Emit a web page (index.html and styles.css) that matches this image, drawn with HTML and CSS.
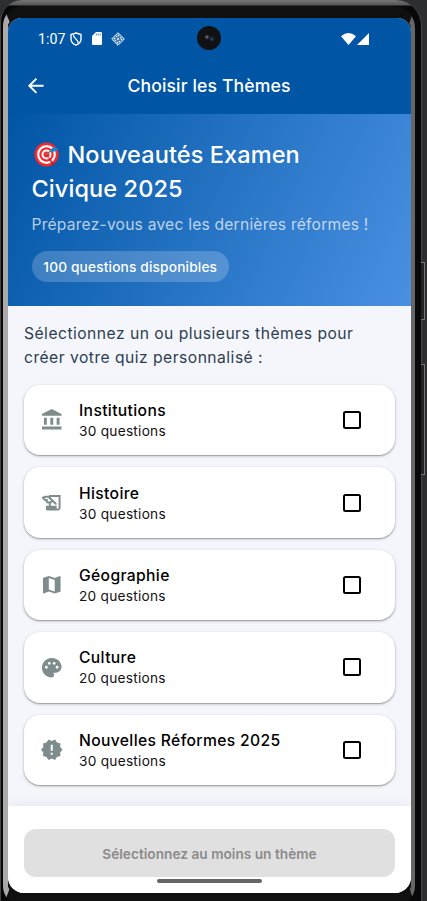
FILE: index.html
```html
<!DOCTYPE html>
<html lang="fr">
<head>
<meta charset="utf-8">
<title>Choisir les Thèmes</title>
<link rel="stylesheet" href="styles.css">
</head>
<body>
<div class="device">
<div class="bezel">
<div class="screen">
  <div class="status">
    <span class="clock">1:07</span>
    <svg class="s-shield" viewBox="0 0 12 14"><path d="M6 1 11 2.600V7c0 3-2 5-5 6.200C3 12 1 10 1 7V2.600Z" fill="none" stroke="#fff" stroke-width="1.400"/><path d="M3.500 3C3.500 7.500 8.700 6.500 8 11.300" fill="none" stroke="#fff" stroke-width="1.300"/></svg>
    <svg class="s-card" viewBox="0 0 10 13"><path d="M4 0h4.800Q10 0 10 1.200v10.600Q10 13 8.800 13H1.200Q0 13 0 11.800V4Z" fill="#fff"/><path d="M4.300 1.500v2M6.200 1.500v2M8.100 1.500v2" stroke="#0055a4" stroke-width=".7"/></svg>
    <svg class="s-diamond" viewBox="0 0 14 14"><g fill="none" stroke="#fff"><path d="M7 .7 13.300 7 7 13.300.7 7Z" stroke-width="1"/><path d="M7 3 11 7 7 11 3 7Z" stroke-width="1.300" stroke-dasharray="2 .8"/><path d="M5.500 7h3M7 5.500v3" stroke-width="1"/></g></svg>
    <svg class="s-wifi" viewBox="0 0 15 12"><path d="M0 3.300Q7.500-3.300 15 3.300L7.500 12Z" fill="#fff"/></svg>
    <svg class="s-signal" viewBox="0 0 12 12"><path d="M12 0v12H0Z" fill="#fff"/></svg>
    <div class="camera"></div>
  </div>
  <header class="appbar">
    <svg class="back" viewBox="0 0 24 24"><path d="M20 11H7.830l5.590-5.590L12 4l-8 8 8 8 1.410-1.410L7.830 13H20v-2z" fill="#fff"/></svg>
    <h1>Choisir les Thèmes</h1>
  </header>
  <section class="hero">
    <h2><svg class="target" viewBox="0 0 26 26"><circle cx="12.500" cy="13.500" r="12" fill="#f9282b"/><circle cx="12.500" cy="13.500" r="8.300" fill="none" stroke="#fff" stroke-width="2.200"/><circle cx="12.500" cy="13.500" r="4" fill="none" stroke="#fff" stroke-width="2"/><path d="m13 14 8 9-3 2Z" fill="#b71f30" opacity=".75"/><path d="m12.500 13.500 7-6" stroke="#6d7f89" stroke-width="1.500"/><path d="m16.500 10.500 1-3 3-2 .8 1.600 3.200.2-2.500 2.700-4 1.200Z" fill="#1689d4"/></svg><span>Nouveautés Examen</span><br><span class="l2">Civique 2025</span></h2>
    <p class="sub">Préparez-vous avec les dernières réformes !</p>
    <span class="chip"><span>100 questions disponibles</span></span>
  </section>
  <main class="content">
    <p class="intro">Sélectionnez un ou plusieurs thèmes pour<br>créer votre quiz personnalisé :</p>
    <div class="list">
      <label class="card"><svg class="icon" viewBox="0 0 24 24"><path d="M4 10h3v7H4zM10.500 10h3v7h-3zM2 19h20v3H2zM17 10h3v7h-3zM12 1 2 6v2h20V6z"/></svg><span class="text"><b>Institutions</b><small>30 questions</small></span><i class="box"></i></label>
      <label class="card"><svg class="icon" viewBox="0 0 24 24"><path d="M9 4v1.380c-.83-.33-1.720-.5-2.610-.5-1.790 0-3.580.68-4.950 2.050l3.330 3.330h1.110v1.110c.86.86 1.980 1.310 3.110 1.360V15H6v3c0 1.100.9 2 2 2h10c1.660 0 3-1.340 3-3V4H9zm-1.110 6.410V8.260H5.610L4.570 7.220a5.070 5.070 0 0 1 1.820-.34c1.340 0 2.590.52 3.540 1.460l1.410 1.410-.2.2a2.700 2.700 0 0 1-1.920.8c-.47 0-.93-.12-1.330-.34zM19 17c0 .55-.45 1-1 1s-1-.45-1-1v-2h-6v-2.590c.57-.23 1.100-.57 1.560-1.030l.2-.2L15.590 14H17v-1.410l-6-5.970V6h8v11z"/></svg><span class="text"><b>Histoire</b><small>30 questions</small></span><i class="box"></i></label>
      <label class="card"><svg class="icon" viewBox="0 0 24 24"><path d="M20.500 3l-.16.03L15 5.100 9 3 3.360 4.900c-.21.07-.36.25-.36.48V20.500c0 .28.22.5.5.5l.16-.03L9 18.900l6 2.100 5.640-1.900c.21-.07.36-.25.36-.48V3.500c0-.28-.22-.5-.5-.5zM15 19l-6-2.110V5l6 2.110V19z"/></svg><span class="text"><b>Géographie</b><small>20 questions</small></span><i class="box"></i></label>
      <label class="card"><svg class="icon" viewBox="0 0 24 24"><path d="M12 2C6.490 2 2 6.490 2 12s4.490 10 10 10a2.500 2.500 0 0 0 2.500-2.500c0-.61-.23-1.200-.64-1.670a.528.528 0 0 1-.13-.33c0-.28.22-.5.5-.5H16c3.310 0 6-2.690 6-6 0-4.960-4.490-9-10-9zm5.500 11c-.83 0-1.500-.67-1.500-1.500s.67-1.500 1.500-1.500 1.500.67 1.500 1.500-.67 1.500-1.500 1.500zm-3-4c-.83 0-1.500-.67-1.500-1.500S13.670 6 14.500 6s1.500.67 1.500 1.500S15.330 9 14.500 9zM5 11.500c0-.83.67-1.500 1.500-1.500s1.500.67 1.500 1.500S7.330 13 6.500 13 5 12.330 5 11.500zm6-4c0 .83-.67 1.500-1.500 1.500S8 8.330 8 7.500 8.670 6 9.500 6s1.500.67 1.500 1.500z"/></svg><span class="text"><b>Culture</b><small>20 questions</small></span><i class="box"></i></label>
      <label class="card"><svg class="icon" viewBox="0 0 24 24"><path d="M23 12l-2.440-2.780.34-3.680-3.610-.82-1.890-3.180L12 3 8.600 1.540 6.710 4.720l-3.610.81.34 3.680L1 12l2.440 2.780-.34 3.690 3.610.82 1.890 3.180L12 21l3.400 1.460 1.890-3.180 3.610-.82-.34-3.680L23 12zm-10 5h-2v-2h2v2zm0-4h-2V7h2v6z"/></svg><span class="text"><b>Nouvelles Réformes 2025</b><small>30 questions</small></span><i class="box"></i></label>
    </div>
  </main>
  <footer class="footer">
    <div class="button"><span>Sélectionnez au moins un thème</span></div>
    <div class="handle"></div>
  </footer>
</div>
</div>
</div>
</body>
</html>
```
FILE: styles.css
```css
* { box-sizing: border-box; margin: 0; padding: 0; }
body {
  width: 427px;
  height: 901px;
  overflow: hidden;
  background: #2d2e31;
  font-family: Inter, "Liberation Sans", sans-serif;
  position: relative;
}
/* side buttons of the phone */
body::before, body::after {
  content: "";
  position: absolute;
  left: 421px;
  width: 3px;
  border: 1px solid #777;
  border-left: 0;
  background: #222;
}
body::before { top: 262px; height: 56px; }
body::after { top: 364px; height: 109px; }
.device {
  width: 422px;
  height: 930px;
  padding: 6px 4px 0 2px;
  border-radius: 22px 26px 0 0;
  background: linear-gradient(#777 0, #555 5px, #080808 6px);
  border-left: 1px solid #444;
  border-right: 1px solid #444;
}
.bezel {
  height: 900px;
  border-style: solid;
  border-color: #101010 #666 #101010 #aaa;
  border-width: 12px 4px 13px 5px;
  border-radius: 20px 22px 20px 20px;
  background: #101010;
  width: 412px;
}
.screen {
  width: 403px;
  height: 875px;
  border-radius: 14px 14px 16px 16px;
  overflow: hidden;
  display: flex;
  flex-direction: column;
  background: #f5f6fb;
}
.status {
  height: 40px;
  background: #0055a4;
  display: flex;
  align-items: center;
  padding: 1px 42px 0 30px;
  position: relative;
  flex: none;
}
.clock { font: 14.2px/16px Roboto, sans-serif; color: #fff; width: 31.5px; white-space: nowrap; }
.s-shield { width: 12px; height: 14px; }
.s-card { width: 10px; height: 13px; margin-left: 10px; }
.s-diamond { width: 14px; height: 14px; margin-left: 9px; }
.s-wifi { width: 15px; height: 12px; margin-left: auto; }
.s-signal { width: 12px; height: 12px; margin-left: 1px; }
.camera {
  position: absolute;
  left: 189px;
  top: 8px;
  width: 24px;
  height: 24px;
  border-radius: 50%;
  background: radial-gradient(circle at 10px 11px, #8d8ba0 0, #34343c 1.5px, transparent 3px), radial-gradient(circle at 15px 13px, #1b4a72 0, transparent 3px), #101113;
}
.appbar {
  height: 56px;
  flex: none;
  background: #0055a4;
  display: grid;
  grid-template-columns: 23.5px 1fr 24px;
  align-items: center;
  padding: 0 16px 0 15.5px;
}
.back { width: 23.5px; height: 23.5px; }
h1 { font-size: 17.6px; font-weight: 500; letter-spacing: .14px; color: #fff; text-align: center; white-space: nowrap; line-height: 24px; }
.hero {
  height: 192px;
  flex: none;
  padding: 23.5px;
  background: linear-gradient(115.5deg, #0055a4, #4a90e2);
  color: #fff;
}
h2 { font-size: 23.5px; line-height: 34px; font-weight: 500; letter-spacing: .1px; white-space: nowrap; }
.target { width: 26px; height: 26px; vertical-align: -4px; margin: 0 8px 0 2px; }
.sub { font-size: 15.65px; line-height: 23.5px; letter-spacing: .2px; margin-top: 7px; color: rgba(255,255,255,.7); white-space: nowrap; }
.chip {
  display: flex;
  align-items: center;
  justify-content: center;
  width: 197.5px;
  height: 31px;
  margin-top: 15px;
  border-radius: 16px;
  background: rgba(255,255,255,.2);
  font-size: 13.7px;
  font-weight: 500;
  letter-spacing: .16px;
  white-space: nowrap;
}
.content { height: 500px; flex: none; padding: 16px 16px 0; }
.intro { font-size: 15.65px; line-height: 23.5px; letter-spacing: .48px; color: #2c3e50; white-space: nowrap; }
.list { display: flex; flex-direction: column; gap: 12px; margin-top: 16px; }
.card {
  height: 70.4px;
  border-radius: 16px;
  background: #fff;
  box-shadow: 0 1px 3px rgba(0,0,0,.28), 0 1px 1px rgba(0,0,0,.18);
  display: flex;
  align-items: center;
  padding: 0 34px 0 15.5px;
}
.icon { width: 23.5px; height: 23.5px; fill: #7f8c8d; margin-right: 16px; }
.text { flex: 1; display: flex; flex-direction: column; white-space: nowrap; }
.text b { font-size: 15.65px; line-height: 23px; font-weight: 500; letter-spacing: .36px; color: #000; }
.text small { font-size: 13.7px; line-height: 19px; letter-spacing: .25px; color: #111; }
.box { width: 18px; height: 18px; border: 2px solid #000; border-radius: 2.5px; }
.footer {
  height: 87px;
  flex: none;
  padding: 23px 16px 0;
  background: #fff;
  box-shadow: 0 -2px 10px rgba(0,0,0,.05);
}
.button {
  height: 48px;
  border-radius: 12px;
  background: #e0e0e0;
  color: #8b8b8b;
  font-size: 13.7px;
  font-weight: 600;
  display: flex;
  align-items: center;
  justify-content: center;
  white-space: nowrap;
  padding-top: 1px;
}
.handle { width: 105px; height: 4px; border-radius: 2px; background: #666; margin: 2px auto 0; }
```
